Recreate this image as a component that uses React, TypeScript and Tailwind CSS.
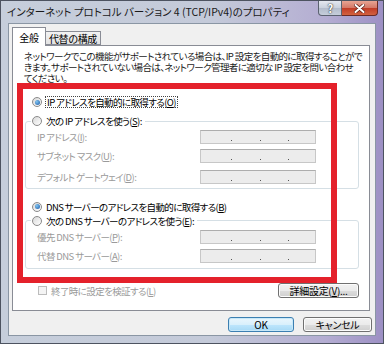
function Radio({ checked = false }: { checked?: boolean }) {
  return (
    <span className="flex h-[10px] w-[10px] shrink-0 items-center justify-center rounded-full border border-[#8a8a8a] bg-[linear-gradient(135deg,#d8d8d8,#ffffff)]">
      {checked && (
        <span className="h-[5px] w-[5px] rounded-full bg-[radial-gradient(circle_at_35%_35%,#7fc4f0,#1d5aa8)]" />
      )}
    </span>
  );
}

function IpBox() {
  return (
    <div className="flex h-[14px] w-[116px] items-end border border-[#c7c7c7] border-t-[#adadad] bg-[#ececec] pb-[2px] text-[#6a6a6a]">
      <span className="ml-[30px] h-[1px] w-[1px] bg-[#555]" />
      <span className="ml-[28px] h-[1px] w-[1px] bg-[#555]" />
      <span className="ml-[27px] h-[1px] w-[1px] bg-[#555]" />
    </div>
  );
}

function IpRow({ label, mt }: { label: React.ReactNode; mt: string }) {
  return (
    <div className={`flex items-center ${mt}`}>
      <span className="w-[174px] whitespace-nowrap pl-[11px] text-[#9a9a9a]">{label}</span>
      <IpBox />
    </div>
  );
}

function Btn({
  children,
  width,
  primary = false,
}: {
  children: React.ReactNode;
  width: string;
  primary?: boolean;
}) {
  return (
    <div
      className={`flex h-[15px] ${width} items-center justify-center rounded-[3px] border text-[10px] leading-none tracking-[-0.3px] ${
        primary
          ? "border-[#3c7fb1] bg-[linear-gradient(#eaf6fd_0%,#d9f0fc_50%,#bee6fd_51%,#a7d9f5_100%)] shadow-[inset_0_0_0_1px_#c8e8f8]"
          : "border-[#707070] bg-[linear-gradient(#f2f2f2_0%,#ebebeb_50%,#dddddd_51%,#cfcfcf_100%)] shadow-[inset_0_0_0_1px_#fcfcfc]"
      }`}
    >
      {children}
    </div>
  );
}

export default function App() {
  return (
    <div className="relative h-[344px] w-[384px] overflow-hidden border border-[#4d5360] bg-[linear-gradient(90deg,#c6cedb_0%,#c4cad9_55%,#b4add2_85%,#9d90c4_100%)] font-['Noto_Sans_CJK_JP','Noto_Sans',sans-serif] text-[9.5px] tracking-[-0.6px] text-black [font-feature-settings:'palt']">
      {/* title bar */}
      <div className="flex h-[22px] items-start">
        <div className="whitespace-nowrap pl-[6px] pt-[4px] text-[10.5px] leading-[14px] tracking-normal text-[#1a1a1a]">
          インターネット プロトコル バージョン 4 (TCP/IPv4)のプロパティ
        </div>
        <div className="ml-auto mr-[5px] flex h-[15px]">
          <div className="flex w-[24px] items-center justify-center rounded-bl-[4px] border border-t-0 border-[#5b6270] bg-[linear-gradient(#e4e8f0_0%,#c9d0dd_50%,#b3bccc_51%,#c6cedb_100%)] text-[11px] font-bold leading-none text-white [text-shadow:0_0_2px_#333,0_0_1px_#333]">
            ?
          </div>
          <div className="flex w-[36px] items-center justify-center rounded-br-[4px] border border-l-0 border-t-0 border-[#6b2a24] bg-[linear-gradient(#e8a493_0%,#d47766_50%,#c13b26_51%,#d2623f_100%)]">
            <svg width="11" height="9" viewBox="0 0 11 9">
              <path d="M1.5 1 L9.5 8 M9.5 1 L1.5 8" stroke="#5a1d16" strokeWidth="3.4" strokeLinecap="round" />
              <path d="M1.5 1 L9.5 8 M9.5 1 L1.5 8" stroke="#ffffff" strokeWidth="2" strokeLinecap="round" />
            </svg>
          </div>
        </div>
      </div>

      {/* client area */}
      <div className="mx-[7px] flex h-[313px] flex-col border border-[#8a96a4] bg-[#f0f0f0]">
        {/* tabs */}
        <div className="flex items-start pl-[3px] pt-[3px] text-[10px] tracking-[-0.3px]">
          <div className="relative z-10 -mb-px flex h-[19px] w-[34px] items-center justify-center border border-b-0 border-[#898c95] bg-white">
            全般
          </div>
          <div className="mt-[4px] flex h-[14px] w-[55px] items-center justify-center border border-l-0 border-[#898c95] bg-[linear-gradient(#f2f2f2,#e3e3e3)]">
            代替の構成
          </div>
        </div>

        {/* panel */}
        <div className="ml-[3px] flex h-[266px] w-[358px] flex-col border border-[#898c95] bg-white">
          <div className="whitespace-nowrap pl-[11px] pt-[5px] leading-[11px] text-[#1a1a1a]">
            ネットワークでこの機能がサポートされている場合は、IP 設定を自動的に取得することがで
            <br />
            きます。サポートされていない場合は、ネットワーク管理者に適切な IP 設定を問い合わせ
            <br />
            てください。
          </div>

          <div className="mt-[12px] flex h-[12px] items-center gap-[3px] pl-[19px]">
            <Radio checked />
            <span className="border border-dotted border-[#444] px-[1px] leading-[10px]">
              IP アドレスを自動的に取得する(<u>O</u>)
            </span>
          </div>

          <fieldset className="ml-[12px] mt-[7px] w-[334px] rounded-[3px] border border-[#d5dfe5] pb-[4px]">
            <legend className="ml-[5px] flex h-[12px] items-center gap-[4px] pl-[1px] pr-[3px]">
              <Radio />
              <span className="whitespace-nowrap">
                次の IP アドレスを使う(<u>S</u>):
              </span>
            </legend>
            <IpRow mt="mt-[3px]" label={<>IP アドレス(<u>I</u>):</>} />
            <IpRow mt="mt-[5px]" label={<>サブネット マスク(<u>U</u>):</>} />
            <IpRow mt="mt-[6px]" label={<>デフォルト ゲートウェイ(<u>D</u>):</>} />
          </fieldset>

          <div className="mt-[12px] flex h-[12px] items-center gap-[4px] pl-[19px]">
            <Radio checked />
            <span className="whitespace-nowrap">
              DNS サーバーのアドレスを自動的に取得する(<u>B</u>)
            </span>
          </div>

          <fieldset className="ml-[12px] mt-[2px] w-[334px] rounded-[3px] border border-[#d5dfe5] pb-[5px]">
            <legend className="ml-[5px] flex h-[12px] items-center gap-[4px] pl-[1px] pr-[3px]">
              <Radio />
              <span className="whitespace-nowrap">
                次の DNS サーバーのアドレスを使う(<u>E</u>):
              </span>
            </legend>
            <IpRow mt="mt-[3px]" label={<>優先 DNS サーバー(<u>P</u>):</>} />
            <IpRow mt="mt-[5px]" label={<>代替 DNS サーバー(<u>A</u>):</>} />
          </fieldset>

          <div className="mt-[14px] flex items-center justify-between pl-[25px] pr-[10px]">
            <div className="flex items-center gap-[4px] text-[#9a9a9a]">
              <span className="h-[9px] w-[9px] border border-[#bcbcbc] bg-[#f4f4f4]" />
              <span className="whitespace-nowrap">
                終了時に設定を検証する(<u>L</u>)
              </span>
            </div>
            <Btn width="w-[81px]">
              詳細設定(<u>V</u>)...
            </Btn>
          </div>
        </div>

        {/* dialog buttons */}
        <div className="mt-[6px] flex justify-end gap-[9px] pr-[3px]">
          <Btn width="w-[66px]" primary>
            OK
          </Btn>
          <Btn width="w-[69px]">キャンセル</Btn>
        </div>
      </div>

      {/* red annotation box */}
      <div className="absolute left-[16px] top-[82px] h-[200px] w-[320px] border-[6px] border-[#e4212b]" />
    </div>
  );
}
